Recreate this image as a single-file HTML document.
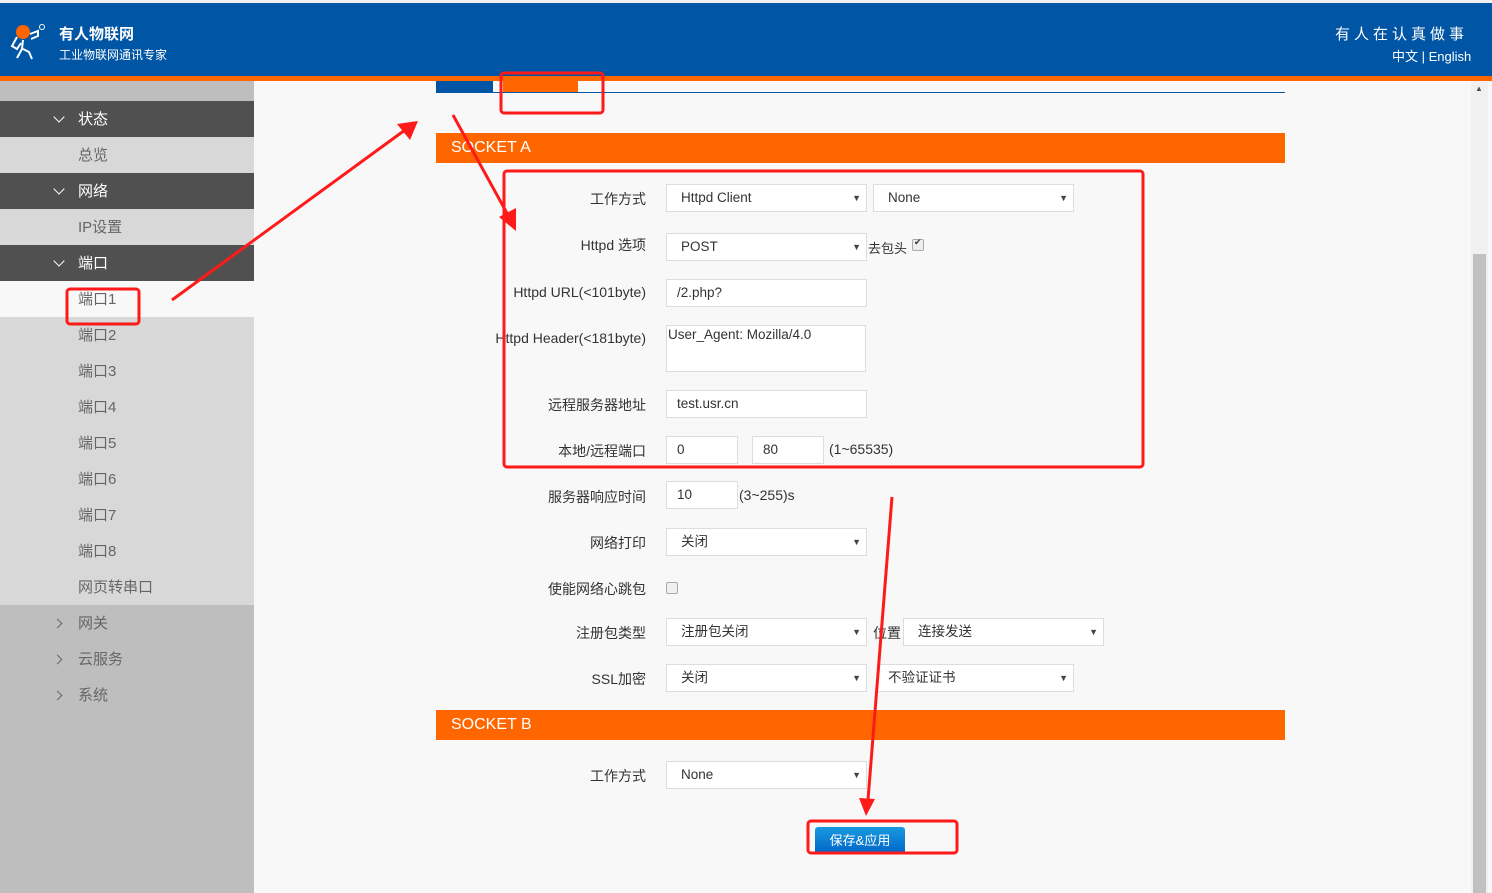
<!DOCTYPE html>
<html><head><meta charset="utf-8"><style>
*{margin:0;padding:0;box-sizing:border-box}
body{width:1492px;height:893px;position:relative;overflow:hidden;background:#f8f8f8;font-family:"Liberation Sans","Noto Sans CJK SC",sans-serif;font-size:14px;color:#333}
.a{position:absolute}
.hdr{left:0;top:3px;width:1492px;height:73px;background:#0055a5}
.org{left:0;top:76px;width:1492px;height:5px;background:#ff6600}
.sb{left:0;top:81px;width:254px;height:812px;background:#bebebe}
.row{position:absolute;left:0;width:254px;height:36px;line-height:38px;padding-left:78px;font-size:15px}
.dk{background:#505050;color:#fff}
.lt{background:#d8d8d8;color:#666}
.dn{position:absolute;left:55px;top:12px;width:8px;height:8px;border-right:1.5px solid #fff;border-bottom:1.5px solid #fff;transform:rotate(45deg)}
.rt{position:absolute;left:54px;top:15px;width:7px;height:7px;border-right:1.5px solid #666;border-top:1.5px solid #666;transform:rotate(45deg)}
.lbl{position:absolute;right:846px;text-align:right;font-size:14px;color:#333}
.inp{position:absolute;background:#fff;border:1px solid #ddd;height:28px;line-height:26px;padding-left:14px;font-size:13.5px;color:#333}
.sel::after{content:"▼";position:absolute;right:5px;top:0;font-size:9px;color:#444}
.sec{position:absolute;left:436px;width:849px;height:30px;background:#ff6600;color:#fff;font-size:16px;line-height:30px;padding-left:15px}
.cb{position:absolute;width:12px;height:12px;border:1px solid #aaa;border-radius:2px;background:#f0f0f0}
</style></head><body>
<div class="a" style="left:0;top:0;width:1492px;height:3px;background:#f0f0f0"></div>
<div class="a hdr"></div>
<svg class="a" style="left:10px;top:22px" width="38" height="40" viewBox="0 0 38 40"><circle cx="13" cy="10" r="7" fill="#ff6600"/><circle cx="32" cy="5" r="2.5" fill="none" stroke="#fff" stroke-width="1"/><path d="M7 15 L2 24 L7 27 L11 21 M20 12 L28 9 L28 14 L21 17 M13 18 L12 27 L7 36 M13 27 L19 30 L22 37" stroke="#fff" stroke-width="2" fill="none"/></svg>
<div class="a" style="left:59px;top:23px;color:#fff;font-size:15px;font-weight:bold">有人物联网</div>
<div class="a" style="left:59px;top:46px;color:#fff;font-size:12px">工业物联网通讯专家</div>
<div class="a" style="left:1335px;top:23px;color:#fff;font-size:15px;letter-spacing:4px">有人在认真做事</div>
<div class="a" style="left:1392px;top:46px;color:#fff;font-size:13px">中文 | English</div>
<div class="a org"></div>
<div class="a sb"></div>
<div class="row dk" style="top:101px"><span class="dn"></span>状态</div>
<div class="row lt" style="top:137px">总览</div>
<div class="row dk" style="top:173px"><span class="dn"></span>网络</div>
<div class="row lt" style="top:209px">IP设置</div>
<div class="row dk" style="top:245px"><span class="dn"></span>端口</div>
<div class="row lt" style="top:281px;background:#f8f8f8">端口1</div>
<div class="row lt" style="top:317px">端口2</div>
<div class="row lt" style="top:353px">端口3</div>
<div class="row lt" style="top:389px">端口4</div>
<div class="row lt" style="top:425px">端口5</div>
<div class="row lt" style="top:461px">端口6</div>
<div class="row lt" style="top:497px">端口7</div>
<div class="row lt" style="top:533px">端口8</div>
<div class="row lt" style="top:569px">网页转串口</div>
<div class="row" style="top:605px;color:#666"><span class="rt"></span>网关</div>
<div class="row" style="top:641px;color:#666"><span class="rt"></span>云服务</div>
<div class="row" style="top:677px;color:#666"><span class="rt"></span>系统</div>

<div class="a" style="left:436px;top:81px;width:57px;height:11px;background:#0055a5"></div>
<div class="a" style="left:503px;top:81px;width:75px;height:11px;background:#ff6600"></div>
<div class="a" style="left:436px;top:92px;width:849px;height:1px;background:#0055a5"></div>

<div class="sec" style="top:133px">SOCKET A</div>
<div class="lbl" style="top:189px">工作方式</div>
<div class="inp sel" style="left:666px;top:184px;width:201px">Httpd Client</div>
<div class="inp sel" style="left:873px;top:184px;width:201px">None</div>
<div class="lbl" style="top:235px">Httpd 选项</div>
<div class="inp sel" style="left:666px;top:233px;width:201px">POST</div>
<div class="a" style="left:868px;top:238px;font-size:13px">去包头</div>
<div class="cb" style="left:912px;top:239px;background:#eee"><span style="position:absolute;left:1px;top:-3px;font-size:9px">✔</span></div>
<div class="lbl" style="top:284px">Httpd URL(&lt;101byte)</div>
<div class="inp" style="left:666px;top:279px;width:201px;padding-left:10px">/2.php?</div>
<div class="lbl" style="top:330px">Httpd Header(&lt;181byte)</div>
<div class="inp" style="left:666px;top:325px;width:200px;height:47px;line-height:16px;padding:1px 1px">User_Agent: Mozilla/4.0</div>
<div class="lbl" style="top:395px">远程服务器地址</div>
<div class="inp" style="left:666px;top:390px;width:201px;padding-left:10px">test.usr.cn</div>
<div class="lbl" style="top:441px">本地/远程端口</div>
<div class="inp" style="left:666px;top:436px;width:72px;padding-left:10px">0</div>
<div class="inp" style="left:752px;top:436px;width:72px;padding-left:10px">80</div>
<div class="a" style="left:829px;top:441px">(1~65535)</div>
<div class="lbl" style="top:487px">服务器响应时间</div>
<div class="inp" style="left:666px;top:481px;width:72px;padding-left:10px">10</div>
<div class="a" style="left:739px;top:487px">(3~255)s</div>
<div class="lbl" style="top:533px">网络打印</div>
<div class="inp sel" style="left:666px;top:528px;width:201px">关闭</div>
<div class="lbl" style="top:579px">使能网络心跳包</div>
<div class="cb" style="left:666px;top:582px"></div>
<div class="lbl" style="top:623px">注册包类型</div>
<div class="inp sel" style="left:666px;top:618px;width:201px">注册包关闭</div>
<div class="a" style="left:873px;top:623px">位置</div>
<div class="inp sel" style="left:903px;top:618px;width:201px">连接发送</div>
<div class="lbl" style="top:669px">SSL加密</div>
<div class="inp sel" style="left:666px;top:664px;width:201px">关闭</div>
<div class="inp sel" style="left:877px;top:664px;width:197px;padding-left:10px">不验证证书</div>
<div class="sec" style="top:710px">SOCKET B</div>
<div class="lbl" style="top:766px">工作方式</div>
<div class="inp sel" style="left:666px;top:761px;width:201px">None</div>
<div class="a" style="left:815px;top:827px;width:90px;height:26px;background:linear-gradient(#1a9ae0,#0066c8);color:#fff;border-radius:3px 3px 0 0;font-size:13px;line-height:28px;text-align:center">保存&amp;应用</div>

<div class="a" style="left:1471px;top:81px;width:17px;height:812px;background:#f0f0f0"></div>
<div class="a" style="left:1473px;top:254px;width:13px;height:639px;background:#c1c1c1"></div>
<div class="a" style="left:1475px;top:84px;font-size:8px;color:#505050">▲</div>

<svg class="a" style="left:0;top:0" width="1492" height="893">
<g fill="none" stroke="#ff1a1a" stroke-width="3">
<rect x="501" y="73" width="102" height="40" rx="3"/>
<rect x="67" y="289" width="72" height="35" rx="3"/>
<rect x="504" y="171" width="639" height="296" rx="3"/>
<rect x="808" y="821" width="149" height="32" rx="3"/>
</g>
<g stroke="#ff1a1a" stroke-width="3">
<line x1="172" y1="300" x2="405" y2="130"/>
<line x1="453" y1="115" x2="508" y2="215"/>
<line x1="892" y1="497" x2="868" y2="800"/>
</g>
<g fill="#ff1a1a">
<polygon points="418,121 397,124 410,140"/>
<polygon points="516,231 499,217 516,208"/>
<polygon points="866,816 859,798 875,799"/>
</g>
</svg>
</body></html>
